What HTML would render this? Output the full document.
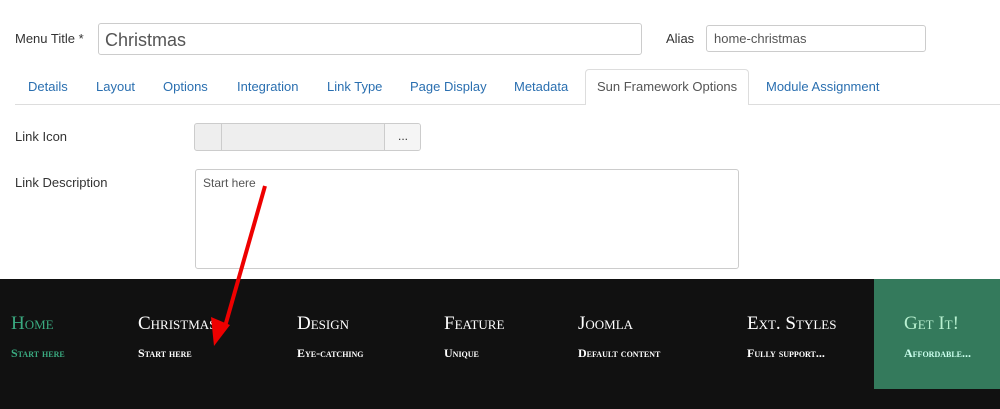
<!DOCTYPE html><html><head><style>
body{margin:0;width:1000px;height:409px;background:#fff;font-family:"Liberation Sans",sans-serif;position:relative;overflow:hidden;font-size:13px;color:#333}
.a{position:absolute}
.inp{position:absolute;border:1px solid #ccc;border-radius:3px;background:#fff;box-sizing:border-box}
.tab{position:absolute;top:79px;color:#2a6fb0;font-size:13px}
.bar{position:absolute;left:0;top:279px;width:1000px;height:130px;background:#111}
.t{position:absolute;top:313px;font-family:"Liberation Serif",serif;font-variant:small-caps;font-size:19px;color:#fff}
.s{position:absolute;top:346px;font-family:"Liberation Serif",serif;font-variant:small-caps;font-size:12px;color:#fff;font-weight:bold}
</style></head><body>
<div class="a" style="left:15px;top:31px">Menu Title *</div>
<div class="inp" style="left:98px;top:23px;width:544px;height:32px;font-size:18px;padding:6px 6px;color:#555">Christmas</div>
<div class="a" style="left:666px;top:31px">Alias</div>
<div class="inp" style="left:706px;top:25px;width:220px;height:27px;padding:5px 7px;color:#555">home-christmas</div>
<div class="a" style="left:15px;top:104px;width:985px;height:1px;background:#ddd"></div>
<div class="a" style="left:585px;top:69px;width:164px;height:36px;border:1px solid #ddd;border-bottom:none;border-radius:4px 4px 0 0;background:#fff;box-sizing:border-box"></div>
<div class="tab" style="left:28px">Details</div>
<div class="tab" style="left:96px">Layout</div>
<div class="tab" style="left:163px">Options</div>
<div class="tab" style="left:237px">Integration</div>
<div class="tab" style="left:327px">Link Type</div>
<div class="tab" style="left:410px">Page Display</div>
<div class="tab" style="left:514px">Metadata</div>
<div class="tab" style="left:597px;color:#555">Sun Framework Options</div>
<div class="tab" style="left:766px">Module Assignment</div>
<div class="a" style="left:15px;top:129px">Link Icon</div>
<div class="inp" style="left:194px;top:123px;width:227px;height:28px;background:#eee;overflow:hidden">
<div class="a" style="left:26px;top:0;width:1px;height:26px;background:#ccc"></div>
<div class="a" style="left:189px;top:0;width:36px;height:26px;border-left:1px solid #ccc;background:#f5f5f5;text-align:center;line-height:24px;font-size:12px">...</div>
</div>
<div class="a" style="left:15px;top:175px">Link Description</div>
<div class="inp" style="left:195px;top:169px;width:544px;height:100px;padding:6px 7px;color:#555;font-size:12px">Start here</div>
<div class="bar"></div>
<div class="a" style="left:874px;top:279px;width:126px;height:110px;background:#347a5c"></div>
<div class="t" style="left:11px;color:#3aaa80">Home</div><div class="s" style="left:11px;color:#3aaa80">Start here</div>
<div class="t" style="left:138px">Christmas</div><div class="s" style="left:138px">Start here</div>
<div class="t" style="left:297px">Design</div><div class="s" style="left:297px">Eye-catching</div>
<div class="t" style="left:444px">Feature</div><div class="s" style="left:444px">Unique</div>
<div class="t" style="left:578px">Joomla</div><div class="s" style="left:578px">Default content</div>
<div class="t" style="left:747px">Ext. Styles</div><div class="s" style="left:747px">Fully support...</div>
<div class="t" style="left:904px;color:#b8f0d0">Get It!</div><div class="s" style="left:904px;color:#cfe">Affordable...</div>
<svg class="a" style="left:0;top:0" width="1000" height="409"><line x1="265" y1="186" x2="224" y2="330" stroke="#e00" stroke-width="4"/><polygon points="214,346 211,317 230,325" fill="#e00"/></svg>
</body></html>
